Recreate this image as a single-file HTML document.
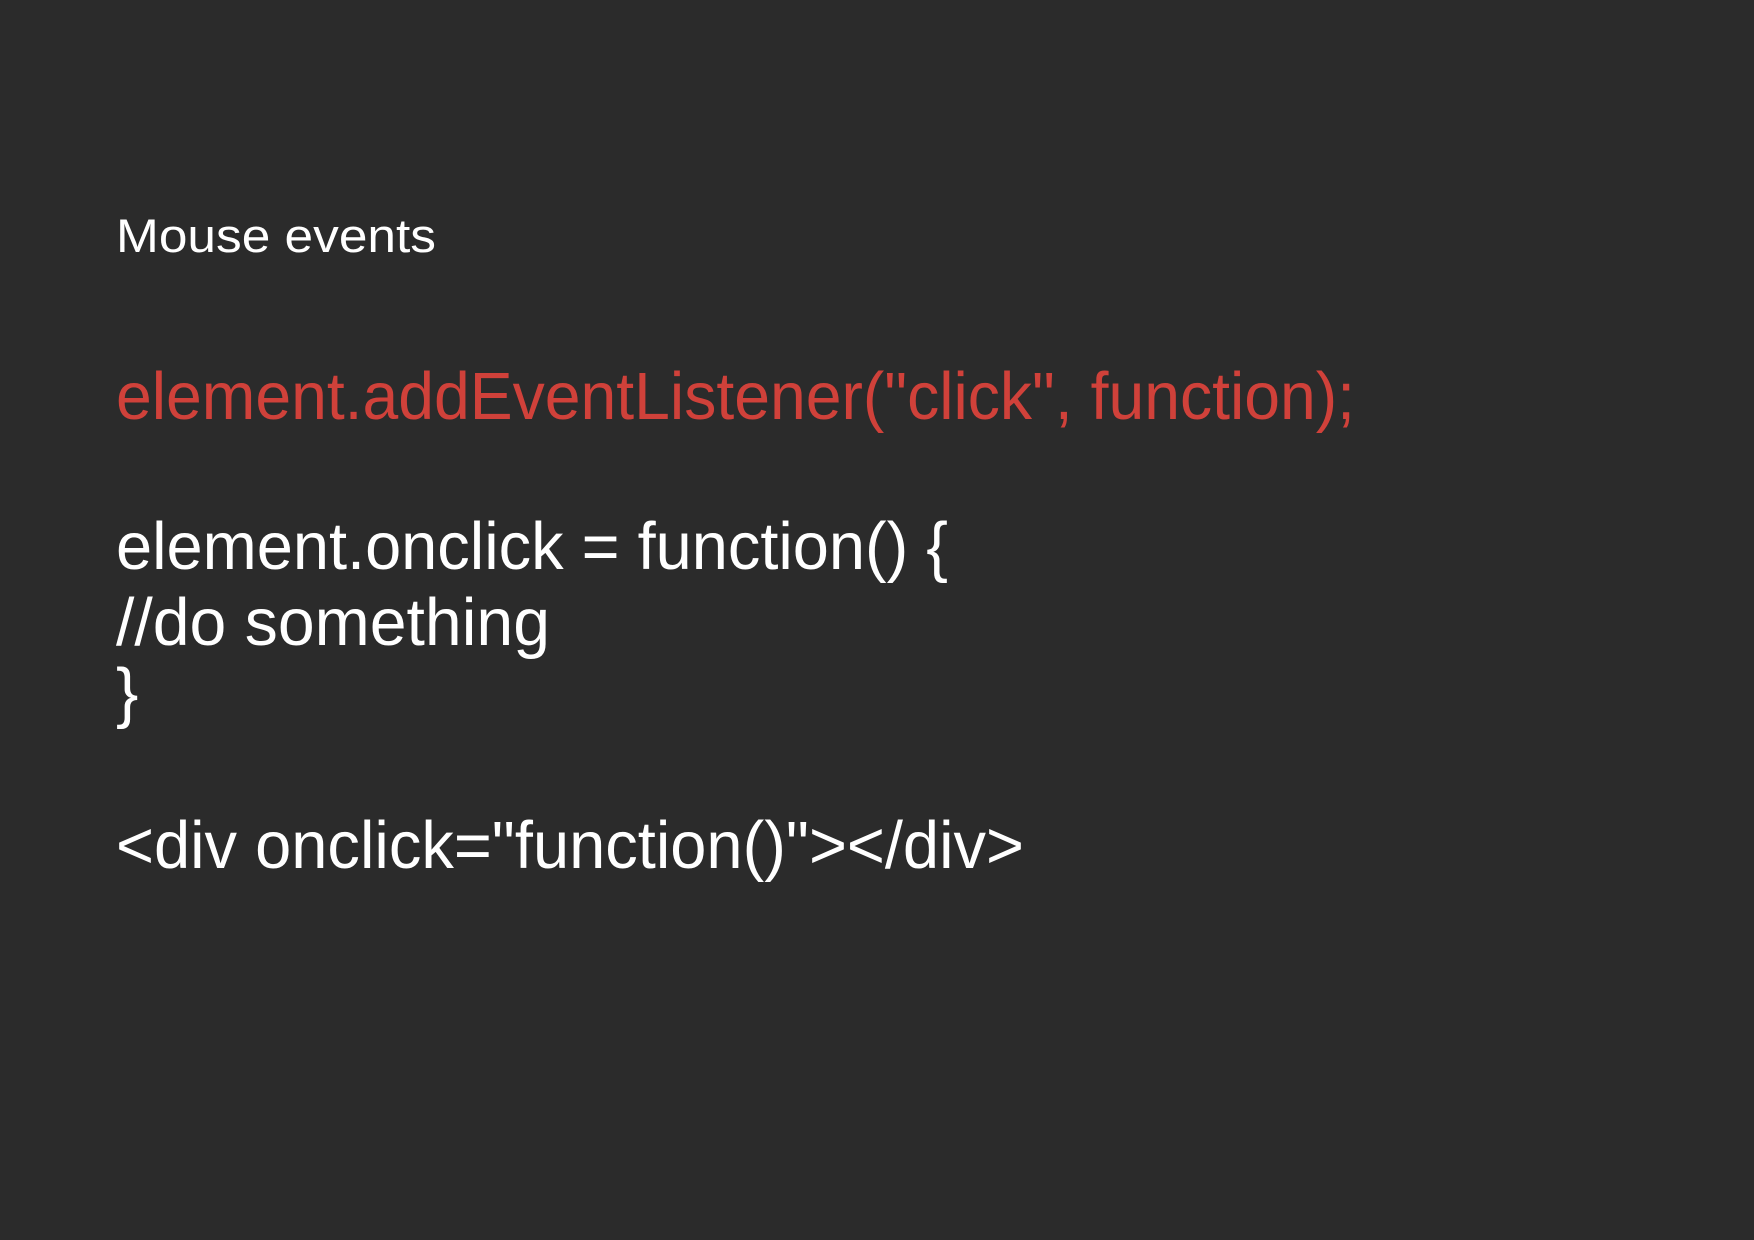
<!DOCTYPE html>
<html>
<head>
<meta charset="utf-8">
<style>
html,body{margin:0;padding:0;background:#2b2b2b;}
svg{display:block;}
text{font-family:"Liberation Sans",sans-serif;}
</style>
</head>
<body>
<svg width="1754" height="1240" viewBox="0 0 1754 1240" xmlns="http://www.w3.org/2000/svg">
<rect width="1754" height="1240" fill="#2b2b2b"/>
<text x="116" y="252" font-size="47" fill="#ffffff" textLength="320" lengthAdjust="spacingAndGlyphs">Mouse events</text>
<text x="116" y="419" font-size="67" fill="#d0413a" textLength="1239" lengthAdjust="spacingAndGlyphs">element.addEventListener("click", function);</text>
<text x="116" y="569" font-size="67" fill="#ffffff" textLength="832" lengthAdjust="spacingAndGlyphs">element.onclick = function() {</text>
<text x="116" y="645" font-size="67" fill="#ffffff" textLength="434" lengthAdjust="spacingAndGlyphs">//do something</text>
<text x="116" y="715" font-size="67" fill="#ffffff">}</text>
<text x="116" y="868" font-size="67" fill="#ffffff" textLength="908" lengthAdjust="spacingAndGlyphs">&lt;div onclick="function()"&gt;&lt;/div&gt;</text>
</svg>
</body>
</html>
